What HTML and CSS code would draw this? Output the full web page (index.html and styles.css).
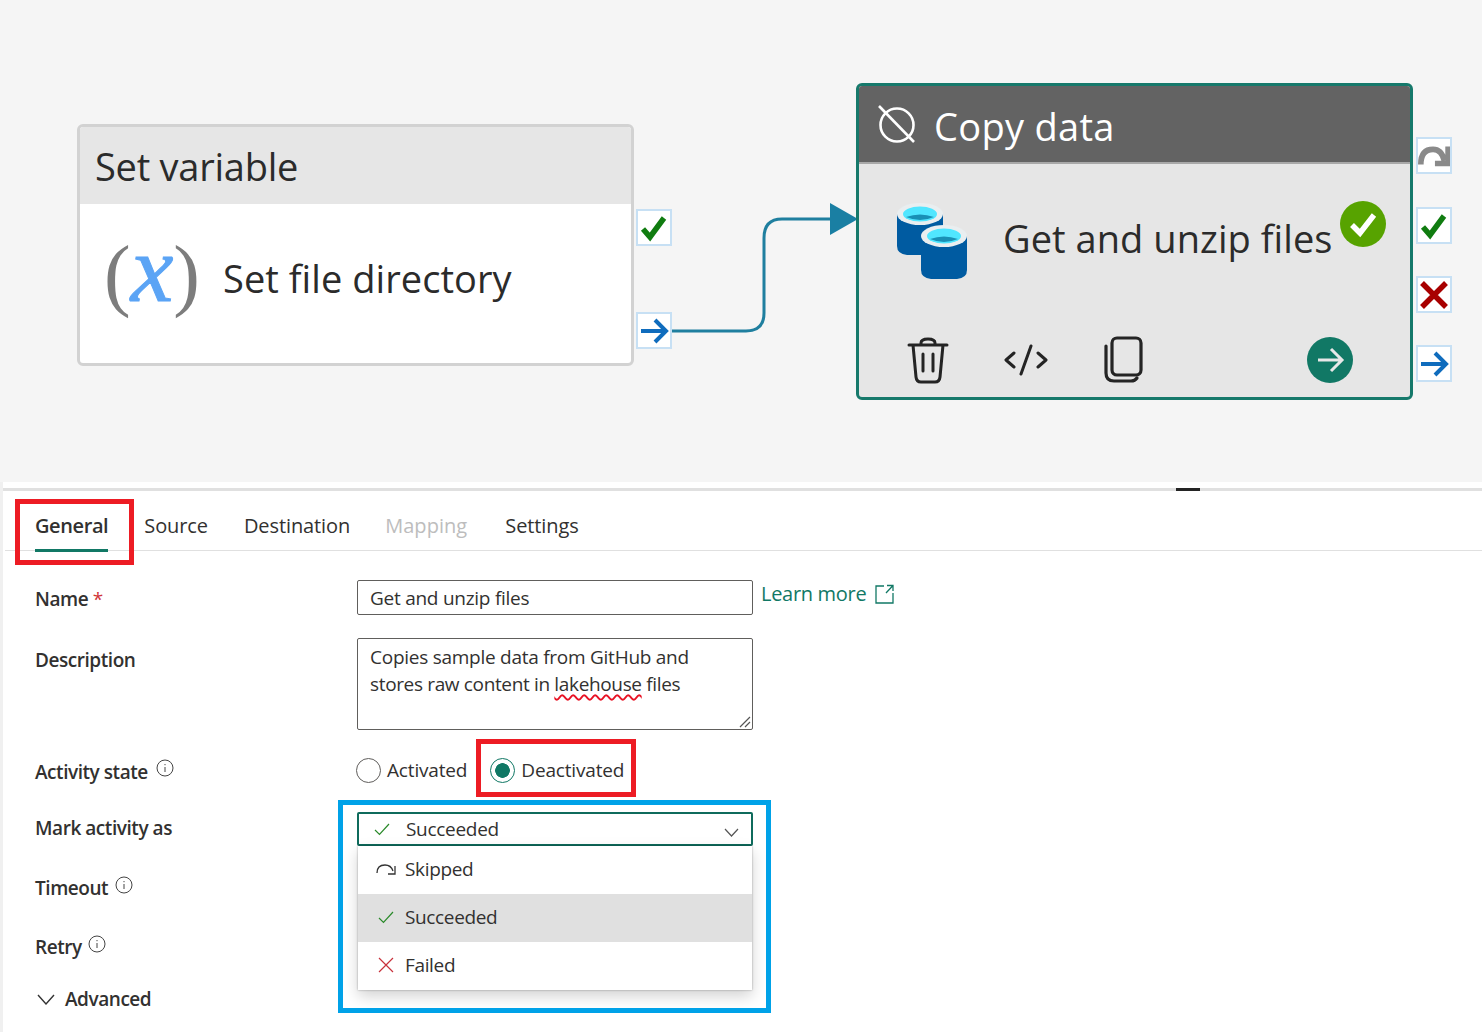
FILE: index.html
```html
<!DOCTYPE html>
<html lang="en">
<head>
<meta charset="utf-8">
<title>Copy data activity</title>
<link rel="stylesheet" href="styles.css">
</head>
<body>
<div class="page">
  <section class="canvas">
    <svg class="wire" width="200" height="150" viewBox="0 0 200 150">
      <path d="M2 129H76Q94 129 94 111V36Q94 17 112 17H162" fill="none" stroke="#1f7f9f" stroke-width="3"/>
      <path d="M160 1L188 17L160 33Z" fill="#1a7fa3"/>
    </svg>

    <article class="node node-var">
      <header class="node-head head-var">Set variable</header>
      <div class="node-body">
        <span class="fx"><span class="paren">(</span><span class="fx-x">x</span><span class="paren">)</span></span>
        <span class="node-name">Set file directory</span>
      </div>
    </article>

    <article class="node node-copy">
      <header class="node-head head-dark">
        <svg class="off-icon" width="42" height="42" viewBox="0 0 42 42" fill="none" stroke="#fff" stroke-width="2.6"><circle cx="21" cy="22" r="16.5"/><path d="M3 3L38 39"/></svg>
        Copy data
      </header>
      <div class="copy-main">
        <svg class="cyl" width="70" height="78" viewBox="0 0 70 78">
          <path d="M0 12V44Q0 52 10 53H26V30H46V12Z" fill="#005ba1"/>
          <ellipse cx="23" cy="12" rx="23" ry="11" fill="#e9eef0"/>
          <ellipse cx="23" cy="12" rx="17" ry="7.5" fill="#50e6ff"/>
          <path d="M9 15Q23 10 37 15Q23 21 9 15Z" fill="#1990b5"/>
          <path d="M24 34V68Q24 76 34 77H60Q70 76 70 68V34Z" fill="#005ba1"/>
          <ellipse cx="47" cy="34" rx="23" ry="11" fill="#e9eef0"/>
          <ellipse cx="47" cy="34" rx="17" ry="7.5" fill="#50e6ff"/>
          <path d="M33 37Q47 32 61 37Q47 43 33 37Z" fill="#1990b5"/>
        </svg>
        <span class="node-name name-copy">Get and unzip files</span>
        <svg class="ok-badge" width="46" height="46" viewBox="0 0 46 46"><circle cx="23" cy="23" r="23" fill="#57a300"/><path d="M12 24L20 32L34 14" fill="none" stroke="#fff" stroke-width="5.5"/></svg>
      </div>
      <div class="copy-tools">
        <svg class="t-trash" width="42" height="47" viewBox="0 0 42 47" fill="none" stroke="#242424" stroke-width="3" stroke-linecap="round" stroke-linejoin="round"><path d="M2 8H40M14 8V6Q14 2 21 2Q28 2 28 6V8M6 8L9 40Q9.500 45 14 45H28Q32.500 45 33 40L36 8M16 17V34M26 17V34"/></svg>
        <svg class="t-code" width="44" height="32" viewBox="0 0 44 32" fill="none" stroke="#242424" stroke-width="3" stroke-linecap="round" stroke-linejoin="round"><path d="M10 9L2 16L10 23M34 9L42 16L34 23M27 2L17 30"/></svg>
        <svg class="t-copy" width="40" height="47" viewBox="0 0 40 47" fill="none" stroke="#242424" stroke-width="3.200" stroke-linejoin="round" stroke-linecap="round"><rect x="9" y="2" width="29" height="37" rx="5"/><path d="M3 10V37Q3 45 11 45H28Q32 45 34 42"/></svg>
        <svg class="t-go" width="46" height="46" viewBox="0 0 46 46"><circle cx="23" cy="23" r="23" fill="#117865"/><path d="M11 23H34M24 12L35 23L24 34" fill="none" stroke="#e8e8e8" stroke-width="3"/></svg>
      </div>
    </article>

    <div class="port p-a"><svg width="30" height="30" viewBox="0 0 30 30"><path class="i-ok" d="M4 16L11 24L25 5"/></svg></div>
    <div class="port p-b"><svg width="30" height="30" viewBox="0 0 30 30"><path class="i-go" d="M2 15H27M16 4L27 15L16 26"/></svg></div>
    <div class="port p-c"><svg width="34" height="30" viewBox="0 0 34 30"><path class="i-skip" d="M3 24Q3 8 16 8Q25 8 28 20M32 5V23H18"/></svg></div>
    <div class="port p-d"><svg width="30" height="30" viewBox="0 0 30 30"><path class="i-ok" d="M4 16L11 24L25 5"/></svg></div>
    <div class="port p-e"><svg width="30" height="30" viewBox="0 0 30 30"><path class="i-no" d="M3 3L27 27M27 3L3 27"/></svg></div>
    <div class="port p-f"><svg width="30" height="30" viewBox="0 0 30 30"><path class="i-go" d="M2 15H27M16 4L27 15L16 26"/></svg></div>
  </section>

  <section class="panel">
    <div class="rule"><span class="grip"></span></div>
    <nav class="tabs">
      <span class="tab tab-on">General</span>
      <span class="tab">Source</span>
      <span class="tab">Destination</span>
      <span class="tab tab-off">Mapping</span>
      <span class="tab">Settings</span>
    </nav>

    <form class="form">
      <div class="row row-name">
        <span class="label">Name <em class="req">*</em></span>
        <div class="field">Get and unzip files</div>
        <a class="learn">Learn more
          <svg width="19" height="20" viewBox="0 0 19 20" fill="none" stroke="#117865" stroke-width="1.300"><path d="M9 2H1V19H18V9M12 1.500H18V7M18 1.500L11 9"/></svg>
        </a>
      </div>
      <div class="row row-desc">
        <span class="label">Description</span>
        <div class="field area">Copies sample data from GitHub and<br><span class="line2">stores raw content in <span class="typo">lakehouse</span> files</span>
          <svg class="grab" width="12" height="12" viewBox="0 0 12 12" stroke="#555" stroke-width="1.200"><path d="M1 11L11 1M6 11L11 6"/></svg>
        </div>
      </div>
      <div class="row row-state">
        <span class="label">Activity state <svg class="info" width="18" height="18" viewBox="0 0 18 18" fill="none" stroke="#444" stroke-width="1"><circle cx="9" cy="9" r="8"/><path d="M9 8V13M9 5V6.200"/></svg></span>
        <div class="radios">
          <span class="radio"><i class="dot"></i>Activated</span>
          <span class="radio"><i class="dot dot-on"></i>Deactivated</span>
        </div>
      </div>
      <div class="row row-mark">
        <span class="label">Mark activity as</span>
        <div class="select">
          <svg width="16" height="13" viewBox="0 0 16 13" fill="none" stroke="#2a8a2a" stroke-width="1.200"><path d="M1 7L5.500 11.500L15 1"/></svg>
          <span>Succeeded</span>
          <svg class="chev" width="15" height="9" viewBox="0 0 15 9" fill="none" stroke="#555" stroke-width="1.200"><path d="M1 1L7.500 8L14 1"/></svg>
        </div>
      </div>
      <div class="row row-plain">
        <span class="label">Timeout <svg class="info" width="18" height="18" viewBox="0 0 18 18" fill="none" stroke="#444" stroke-width="1"><circle cx="9" cy="9" r="8"/><path d="M9 8V13M9 5V6.200"/></svg></span>
      </div>
      <div class="row row-plain">
        <span class="label">Retry <svg class="info" width="18" height="18" viewBox="0 0 18 18" fill="none" stroke="#444" stroke-width="1"><circle cx="9" cy="9" r="8"/><path d="M9 8V13M9 5V6.200"/></svg></span>
      </div>
      <div class="advanced">
        <svg width="18" height="11" viewBox="0 0 18 11" fill="none" stroke="#333" stroke-width="1.400"><path d="M1 1L9 10L17 1"/></svg>
        <span class="label">Advanced</span>
      </div>
    </form>
  </section>

  <ul class="menu">
    <li class="item item-skip"><svg width="20" height="14" viewBox="0 0 20 14" fill="none" stroke="#333" stroke-width="1.300"><path d="M1 11Q1 3 9 3Q15 3 17 9M19 4V12H12"/></svg>Skipped</li>
    <li class="item item-on"><svg width="16" height="13" viewBox="0 0 16 13" fill="none" stroke="#2a8a2a" stroke-width="1.200"><path d="M1 7L5.500 11.500L15 1"/></svg>Succeeded</li>
    <li class="item"><svg width="16" height="16" viewBox="0 0 16 16" fill="none" stroke="#c8323c" stroke-width="1.200"><path d="M1 1L15 15M15 1L1 15"/></svg>Failed</li>
  </ul>

  <div class="mark mark-general"></div>
  <div class="mark mark-radio"></div>
  <div class="mark mark-blue"></div>
</div>
</body>
</html>
```

FILE: styles.css
```css
* { box-sizing: border-box; }
html, body { margin: 0; padding: 0; }
body { font-family: "Open Sans", "Noto Sans", sans-serif; color: #323130; background: #fff; }
.page { position: relative; width: 1482px; height: 1032px; overflow: hidden; background: #f0f0f0; padding-left: 3px; display: flex; flex-direction: column; }

.canvas { position: relative; height: 482px; flex: none; background: #f5f5f5; margin-left: -3px; }
.wire { position: absolute; left: 670px; top: 202px; }

.node { position: absolute; display: flex; flex-direction: column; border-radius: 6px; overflow: hidden; }
.node-var { left: 77px; top: 124px; width: 557px; height: 242px; border: 3px solid #d2d2d2; background: #fff; }
.node-copy { left: 856px; top: 83px; width: 557px; height: 317px; border: 3px solid #16796b; background: #e6e6e6; }
.node-head { height: 77px; flex: none; background: #e6e6e6; padding: 3px 0 0 15px; display: flex; align-items: center; font-size: 38px; letter-spacing: 0.3px; color: #2b2b2b; }
.head-var { letter-spacing: -0.25px; padding-top: 1px; }
.head-dark { height: 78px; background: #636363; color: #fff; padding-left: 17px; gap: 16px; border-bottom: 2px solid #a8a8a8; }
.off-icon { flex: none; margin-top: -3px; }
.node-body { flex: 1; display: flex; align-items: center; padding: 0 0 12px 24px; }
.fx { display: flex; align-items: center; width: 119px; height: 80px; margin-top: -8px; font-family: "Liberation Serif", serif; font-size: 80px; line-height: 80px; }
.paren { color: #7d7d7d; font-weight: 400; }
.fx-x { color: #5ba4f5; font-style: italic; font-weight: 400; font-size: 96px; margin-top: -10px; -webkit-text-stroke: 1px #5ba4f5; }
.node-name { font-size: 38px; letter-spacing: 0.05px; color: #2b2b2b; white-space: nowrap; }
.copy-main { position: relative; height: 120px; flex: none; display: flex; align-items: flex-start; padding: 38px 0 0 38px; }
.cyl { flex: none; }
.name-copy { margin-left: 36px; margin-top: 10px; }
.ok-badge { position: absolute; left: 481px; top: 37px; }
.copy-tools { position: relative; flex: 1; }
.t-trash { position: absolute; left: 48px; top: 53px; }
.t-code { position: absolute; left: 145px; top: 60px; }
.t-copy { position: absolute; left: 244px; top: 52px; }
.t-go { position: absolute; left: 448px; top: 53px; }

.port { position: absolute; width: 36px; height: 37px; background: #fff; border: 2px solid #c7e0f4; display: flex; align-items: center; justify-content: center; }
.p-a { left: 636px; top: 209px; }
.p-b { left: 636px; top: 312px; }
.p-c { left: 1416px; top: 137px; }
.p-d { left: 1416px; top: 207px; }
.p-e { left: 1416px; top: 276px; }
.p-f { left: 1416px; top: 345px; }
.i-ok { fill: none; stroke: #107c10; stroke-width: 5.500; }
.i-go { fill: none; stroke: #0f6cbd; stroke-width: 4; }
.i-no { fill: none; stroke: #a80000; stroke-width: 5.500; }
.i-skip { fill: none; stroke: #8a8a8a; stroke-width: 6; }

.panel { flex: 1; background: #fff; display: flex; flex-direction: column; }
.rule { position: relative; height: 9px; flex: none; border-bottom: 3px solid #e0e0e0; }
.grip { position: absolute; left: 1173px; bottom: -3px; width: 24px; height: 3px; background: #242424; }
.tabs { height: 60px; flex: none; margin-left: 2px; padding-left: 30px; display: flex; gap: 36px; border-bottom: 1px solid #e0e0e0; }
.tab { position: relative; font-size: 20px; line-height: 70px; height: 60px; color: #323130; letter-spacing: -0.1px; }
.tab-on { font-weight: 600; letter-spacing: -0.4px; }
.tab-on::after { content: ""; position: absolute; left: 0; right: 0; bottom: -1px; height: 3px; background: #117865; }
.tab-off { color: #bdbdbd; letter-spacing: 0.05px; margin: 0 2px 0 -1px; }

.form { padding: 29px 0 0 32px; display: flex; flex-direction: column; }
.row { display: grid; grid-template-columns: 322px 396px auto; }
.label { font-size: 19px; font-weight: 600; letter-spacing: -0.45px; color: #323130; white-space: nowrap; }
.req { color: #d13438; font-style: normal; font-weight: 400; }
.row-name { height: 35px; align-items: center; }
.row-name .label { padding-top: 2px; }
.field { border: 1px solid #605e5c; border-radius: 2px; font-size: 19px; letter-spacing: -0.26px; color: #323130; padding: 0 12px; line-height: 34px; height: 35px; white-space: nowrap; }
.learn { display: inline-flex; align-items: center; gap: 9px; margin-left: 8px; font-size: 20px; letter-spacing: -0.3px; color: #117865; align-self: start; line-height: 28px; }
.row-desc { margin-top: 23px; height: 92px; }
.row-desc .label { padding-top: 9px; }
.area { position: relative; height: 92px; line-height: 27px; padding-top: 5px; }
.line2 { letter-spacing: -0.35px; }
.typo { text-decoration: underline wavy #e81123 1.5px; text-underline-offset: 3px; }
.grab { position: absolute; right: 1px; bottom: 1px; }
.row-state { margin-top: 22px; height: 36px; align-items: center; }
.row-state .label { padding-top: 3px; }
.info { margin-left: 4px; vertical-align: 2px; }
.radios { display: flex; gap: 23px; margin-left: -1px; }
.radio { display: inline-flex; align-items: center; gap: 6px; font-size: 19px; letter-spacing: -0.17px; white-space: nowrap; }
.dot { width: 25px; height: 25px; border-radius: 50%; border: 1px solid #605e5c; background: #fff; flex: none; }
.dot-on { border: 1.5px solid #117865; background: radial-gradient(circle, #117865 0 7px, #fff 7.600px); }
.row-mark { margin-top: 24px; height: 34px; align-items: center; }
.row-mark .label { margin-top: -2px; }
.select { display: flex; align-items: center; height: 34px; border: 2px solid #0f6b5c; border-radius: 2px; padding-left: 15px; font-size: 19px; letter-spacing: -0.3px; gap: 16px; }
.chev { margin-left: auto; margin-right: 12px; margin-top: 6px; }
.row-plain { height: 38px; align-items: center; margin-top: 22px; }
.row-plain + .row-plain { margin-top: 21px; }
.row-plain .label { padding-top: 2px; }
.row-plain .info { margin-left: 2px; vertical-align: 1px; }
.advanced { display: flex; align-items: center; gap: 10px; margin-top: 15px; margin-left: 2px; height: 38px; }

.menu { position: absolute; left: 358px; top: 846px; width: 394px; height: 144px; margin: 0; padding: 0; list-style: none; background: #fff; box-shadow: 0 0 2px rgba(0,0,0,.35), 0 6px 14px rgba(0,0,0,.18); }
.item { height: 48px; display: flex; align-items: center; font-size: 19px; letter-spacing: -0.35px; gap: 11px; padding: 0 0 2px 20px; }
.item-skip { padding-left: 18px; gap: 9px; }
.item-on { background: #e0e0e0; }

.mark { position: absolute; border: 5px solid #ed1c24; }
.mark-general { left: 15px; top: 499px; width: 119px; height: 66px; }
.mark-radio { left: 476px; top: 739px; width: 160px; height: 58px; }
.mark-blue { left: 338px; top: 800px; width: 433px; height: 213px; border-color: #00a2e8; }
```
